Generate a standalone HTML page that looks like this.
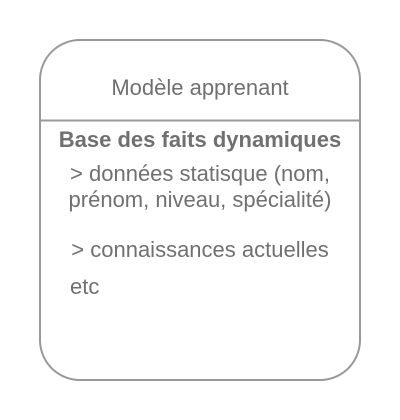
<!DOCTYPE html>
<html><head><meta charset="utf-8"><style>
html,body{margin:0;padding:0;background:#fff;width:400px;height:420px;overflow:hidden}
</style></head><body>
<svg width="400" height="420" xmlns="http://www.w3.org/2000/svg" font-family="Liberation Sans, sans-serif" fill="#707070">
<rect x="40" y="40" width="320" height="340" rx="40" ry="40" fill="#fff" stroke="#999" stroke-width="2"/>
<line x1="40" y1="120.5" x2="360" y2="120.5" stroke="#999" stroke-width="2"/>
<text x="200" y="95" font-size="22" text-anchor="middle">Modèle apprenant</text>
<text x="200" y="147" font-size="22" font-weight="bold" text-anchor="middle">Base des faits dynamiques</text>
<text x="200" y="181" font-size="22" text-anchor="middle">&gt; données statisque (nom,</text>
<text x="200" y="207" font-size="22" text-anchor="middle">prénom, niveau, spécialité)</text>
<text x="200" y="257" font-size="22" text-anchor="middle">&gt; connaissances actuelles</text>
<text x="70" y="294" font-size="22">etc</text>
</svg>
</body></html>
